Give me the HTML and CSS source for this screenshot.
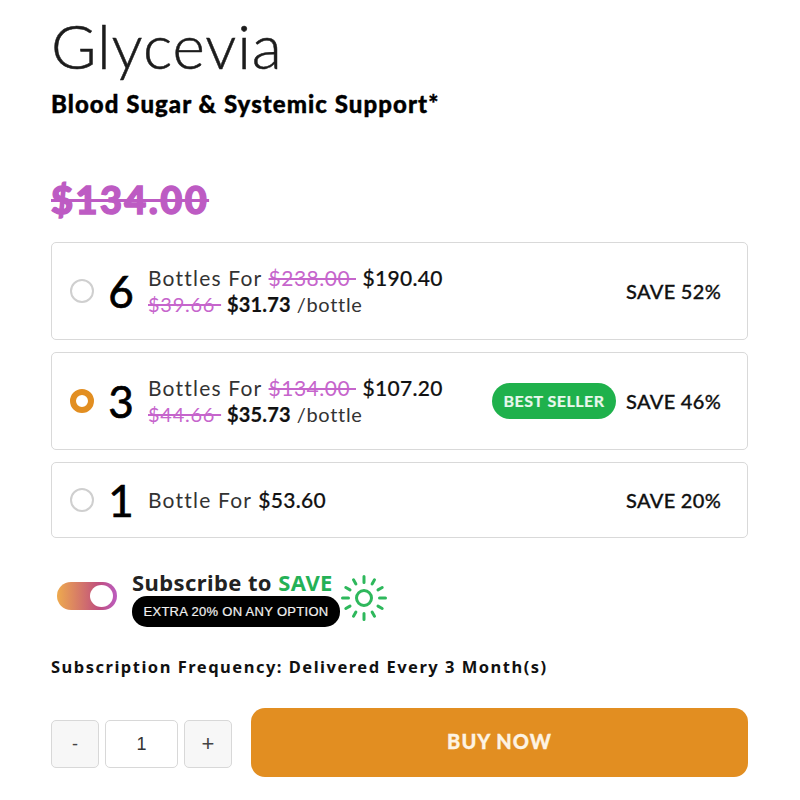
FILE: index.html
```html
<!DOCTYPE html>
<html lang="en">
<head>
<meta charset="utf-8">
<title>Glycevia</title>
<link rel="stylesheet" href="styles.css">
</head>
<body>
<main class="product">
  <h1 class="title">Glycevia</h1>
  <p class="subtitle">Blood Sugar &amp; Systemic Support*</p>
  <p class="list-price"><s>$134.00</s></p>
  <div class="options">
    <div class="option">
      <span class="radio"></span>
      <span class="qty">6</span>
      <div class="desc">
        <div class="line">Bottles For <s class="old">$238.00&nbsp;</s> <b>$190.40</b></div>
        <div class="line second"><s class="old">$39.66&nbsp;</s> <b>$31.73</b> /bottle</div>
      </div>
      <span class="save">SAVE 52%</span>
    </div>
    <div class="option">
      <span class="radio selected"></span>
      <span class="qty">3</span>
      <div class="desc">
        <div class="line">Bottles For <s class="old">$134.00&nbsp;</s> <b>$107.20</b></div>
        <div class="line second"><s class="old">$44.66&nbsp;</s> <b>$35.73</b> /bottle</div>
      </div>
      <span class="badge">BEST SELLER</span>
      <span class="save">SAVE 46%</span>
    </div>
    <div class="option short">
      <span class="radio"></span>
      <span class="qty">1</span>
      <div class="desc">
        <div class="line">Bottle For <b>$53.60</b></div>
      </div>
      <span class="save">SAVE 20%</span>
    </div>
  </div>
  <div class="subscribe">
    <span class="toggle"><span class="knob"></span></span>
    <div class="sub-text">
      <div class="sub-title">Subscribe to <span class="green">SAVE</span></div>
      <div class="pill">EXTRA 20% ON ANY OPTION</div>
    </div>
    <svg class="sun" viewBox="0 0 48 48" width="48" height="48" fill="none" stroke="#2eb85c" stroke-linecap="round">
      <circle cx="24" cy="24" r="7.5" stroke-width="3"/>
      <g stroke-width="3">
        <path d="M24 2.500v6M24 39.500v6M2.500 24h6M39.500 24h6"/>
        <path d="M13.500 5.800l2.400 4.200M32.100 38l2.400 4.200M5.800 13.500l4.200 2.400M38 32.100l4.200 2.400M5.800 34.500l4.200-2.400M38 15.900l4.200-2.400M13.500 42.200l2.400-4.200M32.100 10l2.400-4.200"/>
      </g>
    </svg>
  </div>
  <p class="frequency">Subscription Frequency: Delivered Every 3 Month(s)</p>
  <div class="buy-row">
    <button class="step">-</button>
    <span class="count">1</span>
    <button class="step plus">+</button>
    <button class="buy">BUY NOW</button>
  </div>
</main>
</body>
</html>
```
FILE: styles.css
```css
* { box-sizing: border-box; }
html, body { margin: 0; padding: 0; background: #fff; }
body { font-family: "Lato", "Liberation Sans", sans-serif; color: #111; width: 800px; height: 800px; overflow: hidden; }
.product { width: 697px; margin-left: 51px; padding-top: 13px; }
.title { margin: 0; font-size: 62px; line-height: 64px; font-weight: 300; color: #1c1c1c; letter-spacing: 0.9px; -webkit-text-stroke: 0.5px #1c1c1c; }
.subtitle { margin: 0; padding-top: 13px; font-size: 24px; line-height: 28px; font-weight: 900; color: #000; letter-spacing: 1.06px; -webkit-text-stroke: 0.4px #000; }
.list-price { margin: 0; padding-top: 58px; font-size: 38px; line-height: 46px; font-weight: 900; color: #bd5bc3; letter-spacing: 2.4px; -webkit-text-stroke: 1.4px #bd5bc3; }
.options { display: flex; flex-direction: column; gap: 12px; margin-top: 20px; }
.option { display: flex; align-items: center; height: 98px; border: 1px solid #d9d9d9; border-radius: 5px; padding: 0 26px 0 18px; }
.option.short { height: 76px; }
.radio { width: 24px; height: 24px; border-radius: 50%; border: 2px solid #cfcfcf; flex: none; background: #fff; }
.radio.selected { border: 6px solid #e28e21; }
.qty { width: 30px; margin-left: 12px; flex: none; font-size: 44px; line-height: 50px; text-align: center; font-weight: 400; color: #000; -webkit-text-stroke: 0.7px #000; }
.desc { margin-left: 12px; flex: 1; font-size: 21px; line-height: 26px; letter-spacing: 1.2px; color: #333; font-weight: 400; }
.line { white-space: nowrap; }
.line b { font-weight: 500; color: #111; letter-spacing: 0.3px; -webkit-text-stroke: 0.2px #111; }
.second { font-size: 20px; line-height: 26px; letter-spacing: 0.7px; }
.second b { font-weight: 700; letter-spacing: 0.2px; }
.old { color: #c665cc; letter-spacing: 0.5px; }
.second .old { letter-spacing: 0.75px; }
.badge { flex: none; width: 124px; height: 36px; border-radius: 18px; background: #1fb14c; color: #e9f8ee; font-size: 16px; font-weight: 700; line-height: 36px; letter-spacing: 0.5px; text-align: center; margin-right: 10px; -webkit-text-stroke: 0.2px #e9f8ee; }
.save { flex: none; width: 95px; font-size: 20px; font-weight: 500; color: #111; white-space: nowrap; letter-spacing: 0.3px; -webkit-text-stroke: 0.3px #111; }
.subscribe { display: flex; align-items: flex-start; margin-top: 30px; }
.toggle { display: block; width: 60px; height: 28px; margin: 14px 0 0 6px; border-radius: 14px; background: linear-gradient(90deg, #eeaa4e, #c04f7e 70%, #bb5cc0); padding: 3px 3px 3px 33px; flex: none; }
.knob { display: block; width: 23px; height: 22px; border-radius: 50%; background: #fff; }
.sub-text { margin-left: 15px; }
.sub-title { font-family: "Noto Sans", sans-serif; font-size: 22px; line-height: 28px; font-weight: 700; color: #222; letter-spacing: 0.4px; white-space: nowrap; }
.green { color: #24b156; }
.pill { width: 208px; height: 31px; border-radius: 15px; background: #000; color: #f0f0f0; font-family: "Liberation Sans", sans-serif; font-size: 13px; line-height: 31px; letter-spacing: 0.3px; text-align: center; -webkit-text-stroke: 0.2px #f0f0f0; }
.sun { margin: 6px 0 0 0; flex: none; }
.frequency { margin: 29px 0 0; font-family: "Noto Sans", sans-serif; font-size: 16.500px; line-height: 22px; font-weight: 700; letter-spacing: 1.5px; color: #111; }
.buy-row { display: flex; align-items: flex-start; margin-top: 30px; }
.step { width: 48px; height: 48px; margin-top: 12px; border: 1px solid #d8d8d8; border-radius: 5px; background: #f7f7f7; color: #444; font-family: "Liberation Sans", sans-serif; font-size: 18px; padding: 0; }
.step.plus { font-size: 22px; }
.count { width: 73px; height: 48px; margin: 12px 6px 0; border: 1px solid #d8d8d8; border-radius: 5px; background: #fff; color: #333; font-family: "Liberation Sans", sans-serif; font-size: 18px; line-height: 46px; text-align: center; }
.buy { margin-left: 19px; flex: 1; height: 69px; padding: 0 0 4px; border: 0; border-radius: 14px; background: #e28e21; color: #fdf3e3; font-family: "Lato", sans-serif; font-size: 20px; font-weight: 900; letter-spacing: 1px; -webkit-text-stroke: 0.3px #fdf3e3; }
```
